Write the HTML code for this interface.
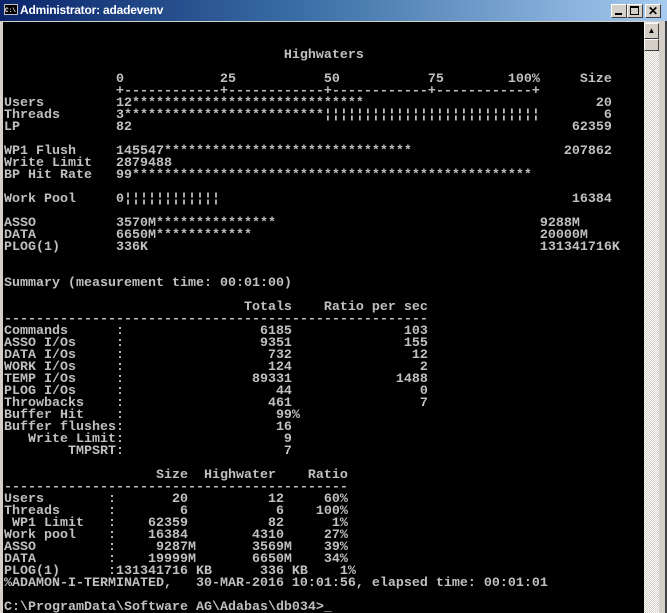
<!DOCTYPE html>
<html><head><meta charset="utf-8"><style>
html,body{margin:0;padding:0;width:667px;height:613px;overflow:hidden;background:#d4d0c8;}
#title{position:absolute;left:0;top:0;width:667px;height:21px;background:linear-gradient(90deg,#0a246a 0%,#3a6ea5 45%,#a6caf0 100%);}
#tt{position:absolute;left:20px;top:3px;color:#fff;font:bold 12px "Liberation Sans",sans-serif;letter-spacing:-0.2px;}
#ico{position:absolute;left:4px;top:4px;width:14px;height:11px;background:#000;border:1px solid #c0c0c0;color:#fff;font:bold 6px "Liberation Mono",monospace;line-height:11px;box-sizing:border-box;}
.btn{position:absolute;top:4px;width:16px;height:14px;background:#d4d0c8;box-sizing:border-box;border:1px solid;border-color:#fff #404040 #404040 #fff;}
#con{position:absolute;left:3px;top:22px;width:641px;height:591px;background:#000;overflow:hidden;}
pre{margin:0;position:absolute;left:1px;top:4px;color:#c0c0c0;font-family:"Liberation Mono",monospace;font-size:13.33px;line-height:12px;font-weight:bold;}
#sb{position:absolute;left:644px;top:22px;width:15px;height:591px;background-color:#fff;background-image:repeating-conic-gradient(#d4d0c8 0 25%,#fff 0 50%);background-size:2px 2px;}
.sbb{position:absolute;left:0;width:15px;background:#d4d0c8;box-sizing:border-box;border:1px solid;border-color:#fff #404040 #404040 #fff;}
#rb{position:absolute;left:659px;top:21px;width:8px;height:592px;background:#d4d0c8;border-right:2px solid #404040;box-sizing:border-box;}
</style></head><body>
<div id="title"><div id="ico">C:\</div><div id="tt">Administrator: adadevenv</div>
<div class="btn" style="left:611px"><div style="position:absolute;left:3px;top:8px;width:7px;height:2px;background:#000"></div></div>
<div class="btn" style="left:627px"><div style="position:absolute;left:2px;top:1px;width:9px;height:9px;border:1px solid #000;border-top-width:2px;box-sizing:border-box"></div></div>
<div class="btn" style="left:645px;font:bold 12px 'Liberation Sans',sans-serif;text-align:center;line-height:12px">✕</div>
</div>
<div id="con"><pre>


                                   Highwaters

              0            25           50           75        100%     Size
              +------------+------------+------------+------------+
Users         12*****************************                             20
Threads       3*************************¦¦¦¦¦¦¦¦¦¦¦¦¦¦¦¦¦¦¦¦¦¦¦¦¦¦¦        6
LP            82                                                       62359

WP1 Flush     145547*******************************                   207862
Write Limit   2879488
BP Hit Rate   99**************************************************

Work Pool     0¦¦¦¦¦¦¦¦¦¦¦¦                                            16384

ASSO          3570M***************                                 9288M
DATA          6650M************                                    20000M
PLOG(1)       336K                                                 131341716K


Summary (measurement time: 00:01:00)

                              Totals    Ratio per sec
-----------------------------------------------------
Commands      :                 6185              103
ASSO I/Os     :                 9351              155
DATA I/Os     :                  732               12
WORK I/Os     :                  124                2
TEMP I/Os     :                89331             1488
PLOG I/Os     :                   44                0
Throwbacks    :                  461                7
Buffer Hit    :                   99%
Buffer flushes:                   16
   Write Limit:                    9
        TMPSRT:                    7

                   Size  Highwater    Ratio
-------------------------------------------
Users        :       20          12     60%
Threads      :        6           6    100%
 WP1 Limit   :    62359          82      1%
Work pool    :    16384        4310     27%
ASSO         :     9287M       3569M    39%
DATA         :    19999M       6650M    34%
PLOG(1)      :131341716 KB      336 KB    1%
%ADAMON-I-TERMINATED,   30-MAR-2016 10:01:56, elapsed time: 00:01:01

C:\ProgramData\Software AG\Adabas\db034>_</pre></div>
<div id="sb"><div class="sbb" style="top:1px;height:16px;font:8px 'Liberation Sans',sans-serif;text-align:center;line-height:13px">▲</div><div class="sbb" style="top:17px;height:12px"></div></div>
<div id="rb"></div>
</body></html>
